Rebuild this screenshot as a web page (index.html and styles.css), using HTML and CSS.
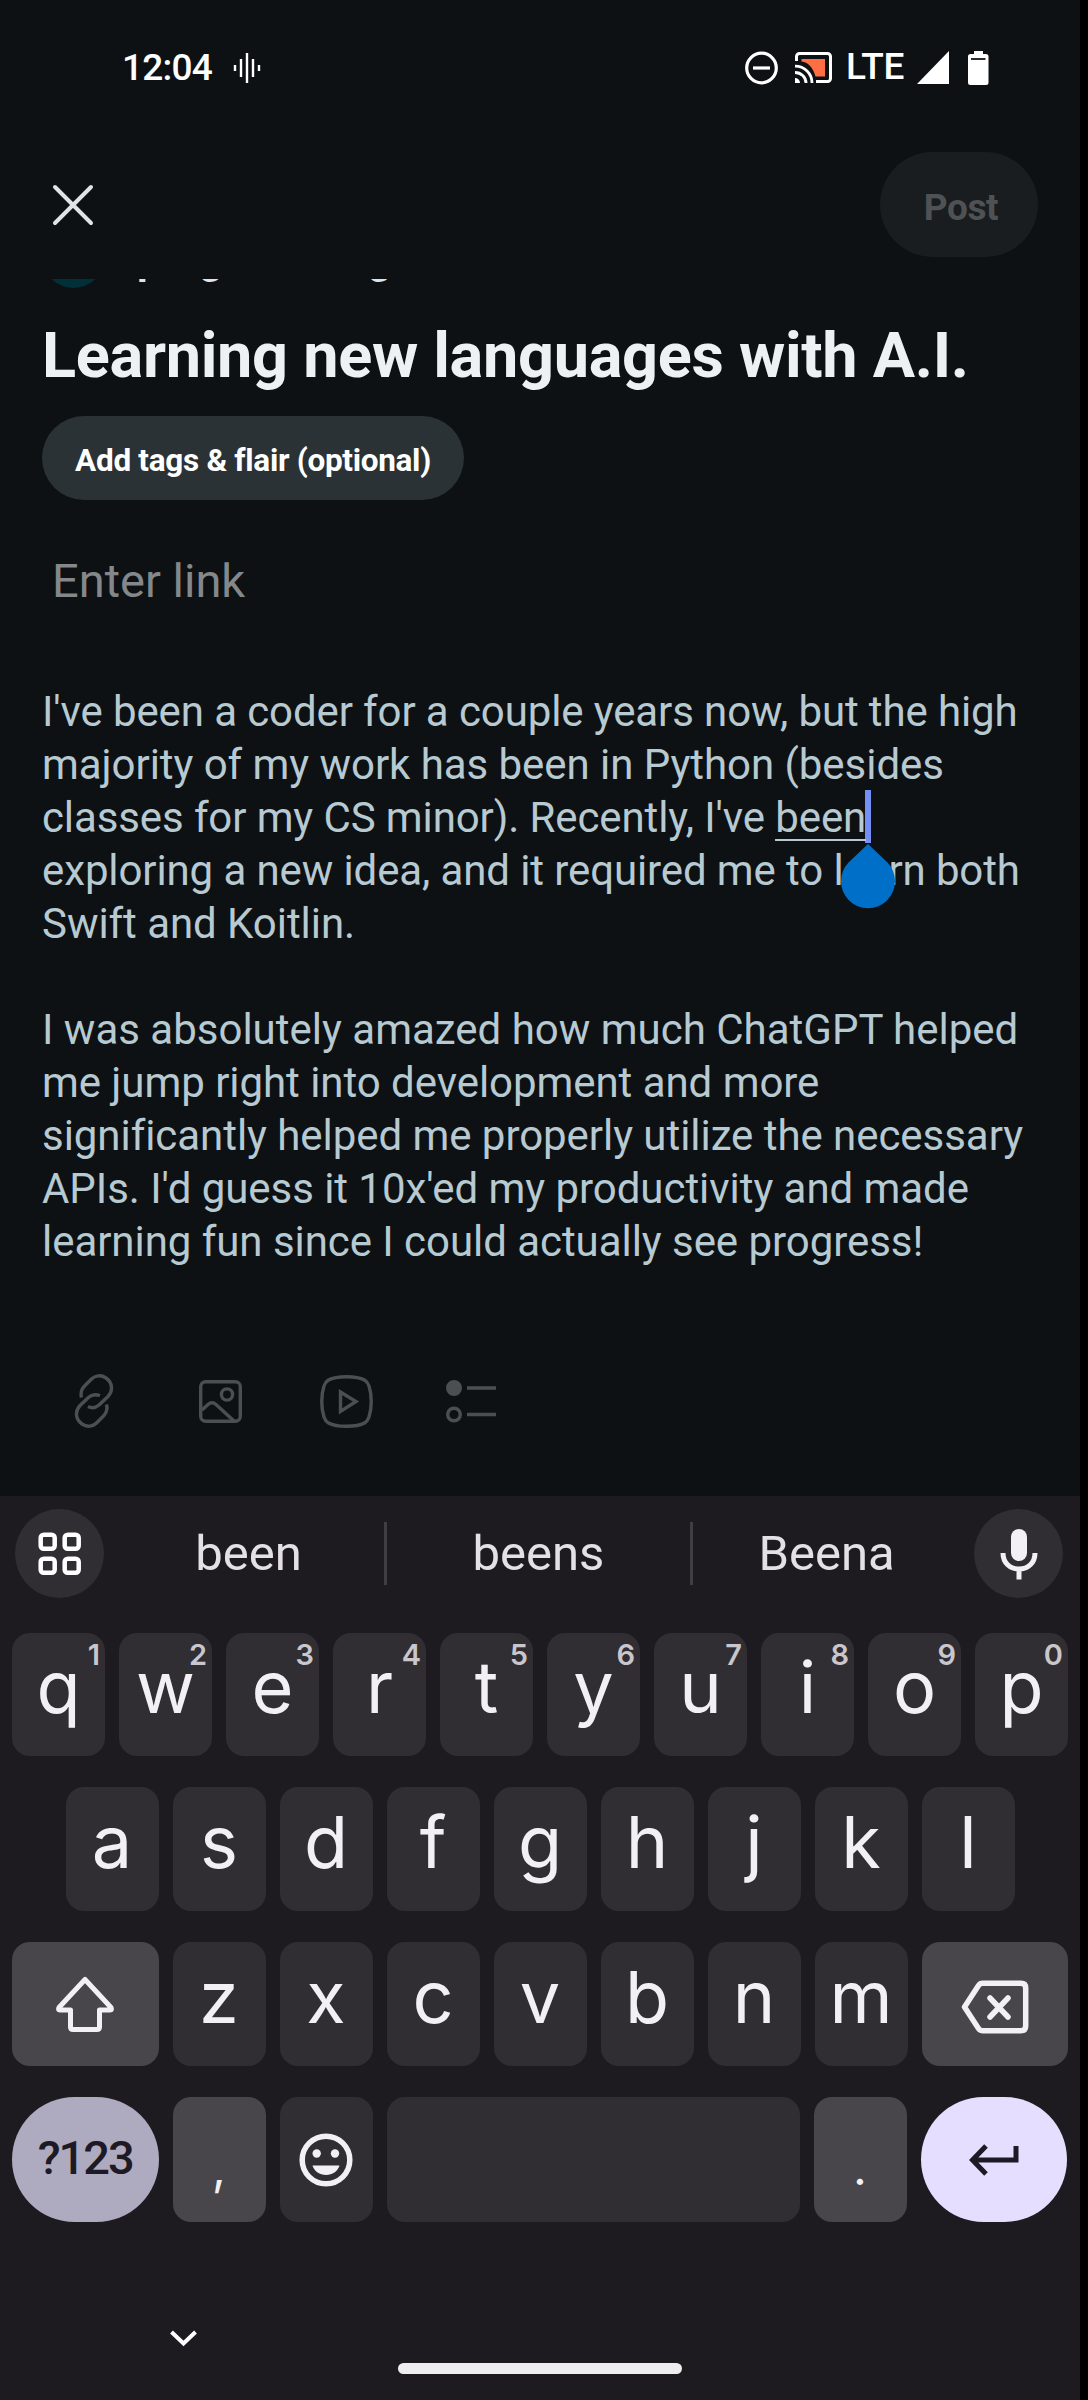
FILE: index.html
```html
<!DOCTYPE html>
<html lang="en">
<head>
<meta charset="utf-8">
<title>Create post</title>
<link rel="stylesheet" href="styles.css">
</head>
<body>
<div class="screen">
  <div class="status">
    <span class="time">12:04</span>
    <svg class="voice" width="28" height="32" viewBox="0 0 28 32" stroke="#fff" stroke-width="2.4"><path d="M2 13v6M8 7v18M14 1v30M20 7v18M26 13v6"/></svg>
    <div class="status-right">
      <svg class="dnd" width="33" height="34" viewBox="0 0 33 34" fill="none" stroke="#fff" stroke-width="3.2"><circle cx="16.5" cy="17" r="14.8"/><path d="M8 17h17"/></svg>
      <svg class="cast" width="37" height="31" viewBox="0 0 37 31" fill="none" stroke="#fff" stroke-width="3"><path d="M1.5 9V4.500a3 3 0 0 1 3-3h28a3 3 0 0 1 3 3v22a3 3 0 0 1-3 3H21"/><path d="M6.500 7h23.500v17.500H20.500C18.500 16 13 10 6.500 9.500z" fill="#ff6f43" stroke="none"/><path d="M0 14.200C9.500 14.200 17 21.500 17 31M0 20.500C6 20.500 11 25 11 31" stroke-width="2.800"/><path d="M0 26a5 5 0 0 1 5 5H0z" fill="#fff" stroke="none"/></svg>
      <span class="lte">LTE</span>
      <svg class="signal" width="32" height="33" viewBox="0 0 32 33"><path d="M0 33L32 0v33z" fill="#fff"/></svg>
      <svg width="21" height="34" viewBox="0 0 21 34"><path d="M6 0h9v3h3a2.500 2.500 0 0 1 2.500 2.500V31.500a2.500 2.500 0 0 1-2.500 2.500H2.500A2.500 2.500 0 0 1 0 31.500V5.500A2.500 2.500 0 0 1 2.500 3H6z" fill="#fff"/><path d="M3 8h14.500" stroke="#2b2e30" stroke-width="2"/></svg>
    </div>
  </div>

  <header class="header">
    <svg width="42" height="42" viewBox="0 0 42 42" stroke="#dfe4e8" stroke-width="4" stroke-linecap="round"><path d="M3 3l36 36M39 3L3 39"/></svg>
    <button class="post">Post</button>
  </header>

  <main class="composer">
    <div class="community"><span class="avatar"></span><span class="name">programming</span></div>
    <h1 class="title">Learning new languages with A.I.</h1>
    <button class="chip">Add tags &amp; flair (optional)</button>
    <div class="link">Enter link</div>
    <div class="text"><span class="tight">I've been a coder for a couple years now, but the high</span><br>majority of my work has been in Python (besides<br><span class="tight">classes for my CS minor). Recently, I've <span class="word">been<span class="caret"></span><svg class="handle" width="54" height="65" viewBox="0 0 54 65"><path d="M27 0L46.500 18.500A27 27 0 1 1 7.500 18.500z" fill="#006fc8"/></svg></span><br>exploring a new idea, and it required me to learn both</span><br>Swift and Koitlin.<br><br><span class="loose">I was absolutely amazed how much ChatGPT helped</span><br>me jump right into development and more<br>significantly helped me properly utilize the necessary<br>APIs. I'd guess it 10x'ed my productivity and made<br>learning fun since I could actually see progress!</div>
    <div class="tools">
      <svg width="40" height="54" viewBox="0 0 40 54"><path d="M7.500 23.500C6 18 8 14.500 11 11.500L17.500 5C21 1.500 27 .500 32 4C39 9 39 17 34 22.500L25 31C21.500 34 17 34 14 32.500M32.500 30.500C34 36 32 39.500 29 42.500L22.500 49C19 52.500 13 53.500 8 50C1 45 1 37 6 31.500L15 23C18.500 20 23 20.500 26 21.500"/></svg>
      <svg width="43" height="43" viewBox="0 0 43 43"><rect x="1.700" y="1.700" width="39.600" height="39.600" rx="5"/><circle cx="28" cy="14.500" r="5.600"/><path d="M3 30l6-5.500q4-3.500 8 0L35 41"/></svg>
      <svg width="53" height="53" viewBox="0 0 53 53"><path d="M26.500 1.700C35 1.700 41 3 44.500 5C47 6.500 48 8 49 11C52 20 52 33 49 42C48 45 47 46.500 44.500 48C41 50 35 51.300 26.500 51.300S12 50 8.500 48C6 46.500 5 45 4 42C1 33 1 20 4 11C5 8 6 6.500 8.500 5C12 3 18 1.700 26.500 1.700z"/><path d="M20.500 17v19.500L36 26.500z"/></svg>
      <svg width="50" height="43" viewBox="0 0 50 43"><circle cx="8" cy="8" r="6.300" fill="#4c4f51"/><circle cx="8" cy="34.500" r="6.300"/><path d="M21 8h29M21 34.500h29"/></svg>
    </div>
  </main>

  <section class="keyboard">
    <div class="suggest">
      <span class="round"><svg width="44" height="44" viewBox="0 0 44 44" fill="none" stroke="#fff" stroke-width="4.500"><rect x="2.700" y="2.700" width="14" height="14" rx="3"/><rect x="26.700" y="2.700" width="14" height="14" rx="3"/><rect x="2.700" y="26.700" width="14" height="14" rx="3"/><rect x="26.700" y="26.700" width="14" height="14" rx="3"/></svg></span>
      <span class="option first">been</span>
      <span class="option middle">beens</span>
      <span class="option last">Beena</span>
      <span class="round"><svg width="38" height="52" viewBox="0 0 38 52"><rect x="11" y="1" width="16" height="32" rx="8" fill="#f2eff5"/><path d="M3 25C3 35 10 41 19 41S35 35 35 25M19 41v10.500" fill="none" stroke="#f2eff5" stroke-width="5"/></svg></span>
    </div>
    <div class="row r1">
      <span class="key">q<sup>1</sup></span><span class="key">w<sup>2</sup></span><span class="key">e<sup>3</sup></span><span class="key">r<sup>4</sup></span><span class="key">t<sup>5</sup></span><span class="key">y<sup>6</sup></span><span class="key">u<sup>7</sup></span><span class="key">i<sup>8</sup></span><span class="key">o<sup>9</sup></span><span class="key">p<sup>0</sup></span>
    </div>
    <div class="row r2">
      <span class="key">a</span><span class="key">s</span><span class="key">d</span><span class="key">f</span><span class="key">g</span><span class="key">h</span><span class="key">j</span><span class="key">k</span><span class="key">l</span>
    </div>
    <div class="row r3">
      <span class="key wide alt"><svg width="60" height="58" viewBox="0 0 60 58" fill="none" stroke="#f2eff5" stroke-width="5" stroke-linejoin="round"><path d="M30 4.500L4 32.500Q2.500 35 5 35H15.500V52Q15.500 54.500 18 54.500H42Q44.500 54.500 44.500 52V35H55Q57.500 35 56 32.500z"/></svg></span>
      <span class="key">z</span><span class="key">x</span><span class="key">c</span><span class="key">v</span><span class="key">b</span><span class="key">n</span><span class="key">m</span>
      <span class="key wide alt del"><svg width="68" height="54" viewBox="0 0 68 54" fill="none" stroke="#f2eff5" stroke-width="5.500" stroke-linejoin="round" stroke-linecap="round"><path d="M3.500 27L17.500 5.500Q19 3.300 21.500 3.300H60Q64.700 3.300 64.700 8V46Q64.700 50.700 60 50.700H21.500Q19 50.700 17.500 48.500zM29 18l18 19M47 18L29 37"/></svg></span>
    </div>
    <div class="row r4">
      <span class="key wide symbols">?123</span>
      <span class="key alt punct">,</span>
      <span class="key"><svg width="54" height="54" viewBox="0 0 54 54"><circle cx="27" cy="27" r="23.800" fill="none" stroke="#f2eff5" stroke-width="5.500"/><circle cx="17.700" cy="20.500" r="4.200" fill="#f2eff5"/><circle cx="36" cy="20.500" r="4.200" fill="#f2eff5"/><path d="M13.500 32.500h27C38.500 38.500 33.500 42 27 42S15.500 38.500 13.500 32.500z" fill="#f2eff5"/></svg></span>
      <span class="key space"></span>
      <span class="key alt punct">.</span>
      <span class="key wide enter"><svg width="50" height="32" viewBox="0 0 50 32" fill="none" stroke="#1d1a26" stroke-width="5"><path d="M47 2v14H5M17 2L3.500 16L17 30"/></svg></span>
    </div>
    <div class="nav">
      <svg class="hide" width="27" height="17" viewBox="0 0 27 17" fill="none" stroke="#fff" stroke-width="4"><path d="M1.500 2l12 11.500L25.500 2"/></svg>
      <span class="home"></span>
    </div>
  </section>
</div>
</body>
</html>
```
FILE: styles.css
```css
* { box-sizing: border-box; }
body { margin: 0; background: #000; }
button { border: 0; padding: 0; font: inherit; }
svg { display: block; flex: none; }

.screen {
  width: 1080px;
  height: 2400px;
  overflow: hidden;
  background: #0d1114;
  font-family: Roboto, sans-serif;
  white-space: nowrap;
}

/* System status bar */
.status {
  display: flex;
  align-items: center;
  height: 135px;
  padding: 0 91px 0 122px;
  color: #fff;
  font-size: 37px;
}
.time { width: 111px; font-weight: 500; letter-spacing: -0.8px; }
.status-right { display: flex; align-items: center; margin-left: auto; }
.cast { margin-left: 17px; }
.lte { width: 62px; margin-left: 14px; padding-bottom: 2px; font-weight: 500; letter-spacing: -0.3px; }
.signal { margin: 0 19px 0 9px; }

/* Composer header */
.header {
  display: flex;
  align-items: center;
  justify-content: space-between;
  height: 144px;
  padding: 17px 42px 22px 52px;
}
.post {
  width: 158px;
  height: 105px;
  padding: 5px 0 0 4px;
  border-radius: 53px;
  background: #1a1d20;
  color: #4f5254;
  font-size: 37px;
  font-weight: 700;
  letter-spacing: -0.4px;
}

/* Post body */
.composer {
  display: flex;
  flex-direction: column;
  align-items: flex-start;
  height: 1217px;
  padding: 0 42px 68px;
  overflow: hidden;
}
.community {
  display: flex;
  flex: none;
  align-items: center;
  height: 63px;
  margin-top: -54px;
}
.avatar { width: 63px; height: 63px; border-radius: 50%; background: #003038; }
.name { margin-left: 32px; padding-top: 4px; color: #dfe4e8; font-size: 42px; font-weight: 700; }
.title {
  margin: 31px 0 0;
  color: #eef1f4;
  font-size: 63px;
  font-weight: 700;
  line-height: 74px;
  letter-spacing: -0.3px;
}
.chip {
  width: 422px;
  height: 84px;
  margin-top: 23px;
  padding-top: 4px;
  border-radius: 42px;
  background: #2a3235;
  color: #fff;
  font-size: 31.5px;
  font-weight: 700;
  letter-spacing: -0.3px;
}
.link { margin: 53px 0 0 10px; color: #85888a; font-size: 47px; line-height: 56px; }
.text { margin-top: 76px; color: #b7c9d1; font-size: 42px; line-height: 53px; letter-spacing: -0.05px; }
.tight { letter-spacing: -0.11px; }
.loose { letter-spacing: 0; }
.word { position: relative; display: inline-block; }
.word::after {
  content: "";
  position: absolute;
  left: 0;
  right: 0;
  bottom: 3px;
  height: 2px;
  background: #b7c9d1;
}
.caret { position: absolute; left: calc(100% - 1px); top: -1px; width: 6px; height: 53px; background: #7590f4; }
.handle { position: absolute; left: calc(100% - 25px); top: 53px; z-index: 1; }
.tools {
  display: flex;
  align-items: center;
  margin: auto 0 0 32px;
  fill: none;
  stroke: #4c4f51;
  stroke-width: 3.4;
}
.tools svg:nth-child(2) { margin-left: 85px; }
.tools svg:nth-child(3) { margin-left: 78px; }
.tools svg:nth-child(4) { margin-left: 73px; }

/* On-screen keyboard */
.keyboard { height: 904px; padding: 13px 12px 0; background: #1d1b20; color: #f2eff5; }
.suggest { display: flex; align-items: center; height: 89px; margin: 0 3px; }
.round {
  display: flex;
  flex: none;
  align-items: center;
  justify-content: center;
  width: 89px;
  height: 89px;
  border-radius: 50%;
  background: #302e33;
}
.option { color: #e4e0e7; font-size: 49px; line-height: 63px; text-align: center; }
.first { width: 280px; padding-left: 9px; }
.middle { width: 309px; border: solid #403e43; border-width: 0 3px; }
.last { width: 281px; padding-right: 14px; }

.row { display: flex; gap: 14px; margin-top: 31px; }
.r1 { height: 123px; margin-top: 35px; }
.r2 { height: 124px; padding: 0 53.5px; }
.r3 { height: 124px; }
.r4 { height: 125px; }
.key {
  position: relative;
  display: flex;
  flex: none;
  align-items: center;
  justify-content: center;
  width: 93px;
  border-radius: 18px;
  background: #302e33;
  font-family: Inter, sans-serif;
  font-size: 72px;
  line-height: 108px;
  padding-bottom: 15px;
}
.key svg { margin-top: 15px; }
.key sup {
  position: absolute;
  top: 6px;
  right: 5px;
  color: #c9c6cc;
  font-size: 29px;
  font-weight: 600;
  line-height: 32px;
}
.wide { width: 146.5px; }
.alt { background: #48454b; }
.del svg { margin-top: 20px; }
.space { width: 413px; }
.punct { padding: 16px 0 0; font-size: 48px; }
.symbols {
  padding: 0 0 4px;
  border-radius: 63px;
  background: #aeaabf;
  color: #1d1a26;
  font-family: Roboto, sans-serif;
  font-size: 47px;
  font-weight: 500;
  letter-spacing: -2px;
}
.enter { border-radius: 63px; background: #e5deff; }
.nav { display: flex; align-items: flex-start; padding: 108px 0 0 158px; }
.home { width: 284px; height: 11px; margin: 33px 0 0 201px; border-radius: 6px; background: #eee; }
```
